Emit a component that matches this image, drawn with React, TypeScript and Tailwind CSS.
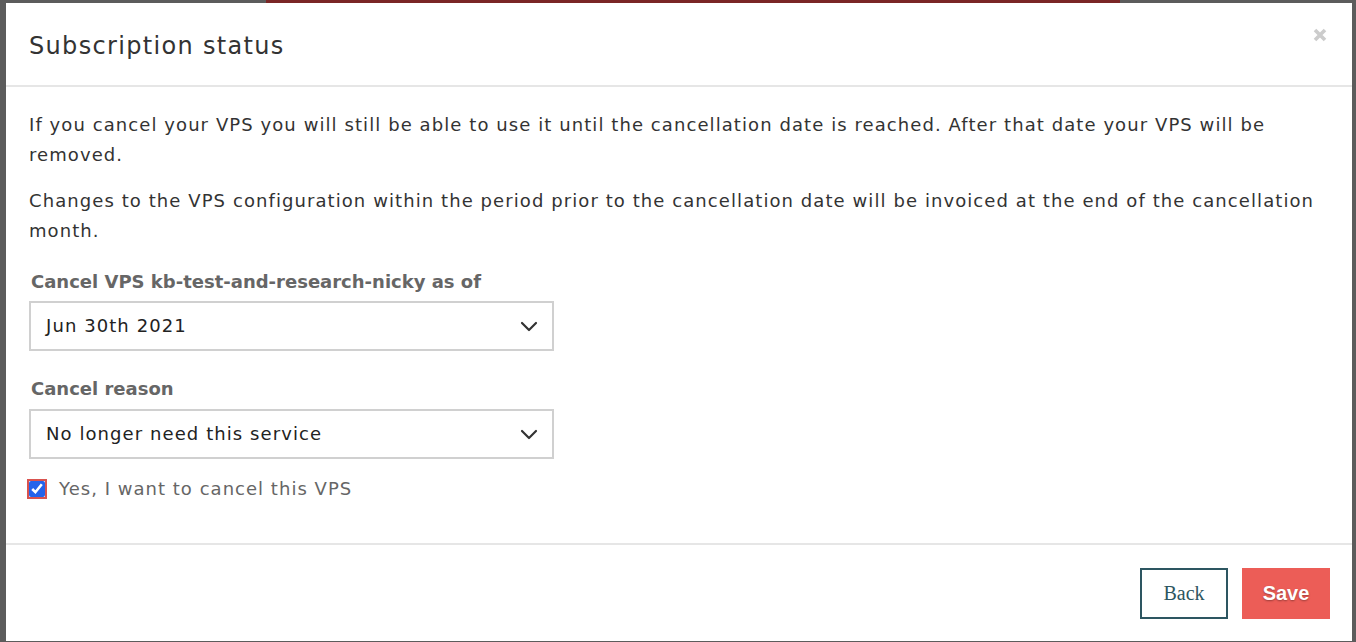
import React from "react";

function Chevron() {
  return (
    <svg width="18" height="12" viewBox="0 0 18 12" fill="none">
      <path d="M2 3l7 7 7-7" stroke="#333" strokeWidth="2.2" strokeLinecap="round" strokeLinejoin="round" />
    </svg>
  );
}

function Select({ value }: { value: string }) {
  return (
    <div className="flex h-[50px] w-[525px] items-center justify-between border-2 border-[#d0d0d0] bg-white pl-[15px] pr-[14px] text-[18px] tracking-[0.06em] text-[#222]">
      <span>{value}</span>
      <Chevron />
    </div>
  );
}

export default function App() {
  return (
    <div
      className="relative h-[642px] w-[1356px] overflow-hidden bg-[#5c5c5c]"
      style={{ fontFamily: '"DejaVu Sans", sans-serif' }}
    >
      <div className="absolute left-[266px] top-0 h-[3px] w-[854px] bg-[#7a2626]" />
      <div className="absolute left-[6px] top-[3px] flex h-[638px] w-[1346px] flex-col bg-white">
        <div className="flex h-[84px] items-center justify-between border-b-2 border-[#e6e6e6] pl-[23px] pr-[25px] pt-[3px]">
          <h1 className="text-[24px] tracking-[0.055em] text-[#333]">Subscription status</h1>
          <svg width="14" height="14" viewBox="0 0 14 14" className="mt-[-21px]">
            <path d="M2 2l10 10M12 2L2 12" stroke="#cccccc" strokeWidth="3.6" strokeLinecap="butt" />
          </svg>
        </div>
        <div className="flex flex-col px-[23px] pt-[23px] text-[18px] leading-[30px] text-[#333]">
          <p className="tracking-[0.06em]">
            If you cancel your VPS you will still be able to use it until the cancellation date is reached. After that date your VPS will be removed.
          </p>
          <p className="mt-[16px] tracking-[0.06em]">
            Changes to the VPS configuration within the period prior to the cancellation date will be invoiced at the end of the cancellation month.
          </p>
          <label className="mt-[21px] pl-[2px] font-bold leading-[30px] text-[#666]">Cancel VPS kb-test-and-research-nicky as of</label>
          <div className="mt-[4px]">
            <Select value="Jun 30th 2021" />
          </div>
          <label className="mt-[23px] pl-[2px] font-bold leading-[30px] text-[#666]">Cancel reason</label>
          <div className="mt-[5px]">
            <Select value="No longer need this service" />
          </div>
          <div className="mt-[15px] flex h-[30px] items-center gap-[14px]">
            <input type="checkbox" defaultChecked className="h-[16px] w-[16px] accent-[#2563eb] outline outline-2 outline-[#d9534f]" />
            <span className="tracking-[0.057em] text-[#666]">Yes, I want to cancel this VPS</span>
          </div>
        </div>
        <div className="mt-auto flex h-[98px] items-center justify-end gap-[14px] border-t-2 border-[#e6e6e6] pr-[22px]">
          <button className="h-[51px] w-[88px] border-2 border-[#2d5661] text-[20px] text-[#2d5661]" style={{ fontFamily: '"Liberation Serif", serif' }}>
            Back
          </button>
          <button
            className="h-[51px] w-[88px] bg-[#ec5d57] text-[20px] font-bold text-white [text-shadow:0_1px_2px_rgba(0,0,0,0.35)]"
            style={{ fontFamily: '"Liberation Sans", sans-serif' }}
          >
            Save
          </button>
        </div>
      </div>
    </div>
  );
}
